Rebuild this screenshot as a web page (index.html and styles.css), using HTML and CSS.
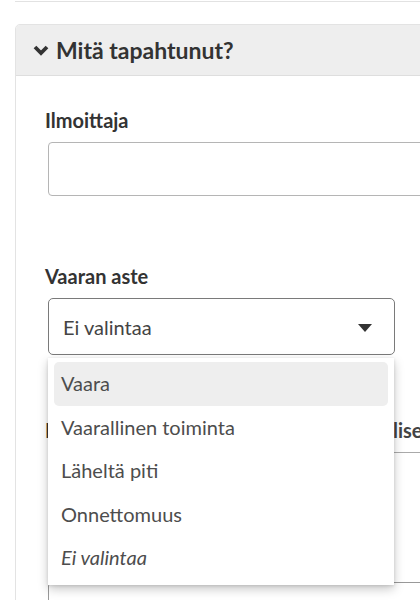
FILE: index.html
```html
<!DOCTYPE html>
<html lang="fi">
<head>
<meta charset="utf-8">
<link rel="stylesheet" href="styles.css">
</head>
<body>
<div class="page">
  <div class="prev-card"></div>
  <section class="card">
    <header class="card-head">
      <svg class="chev" viewBox="0 0 16 11" width="16" height="11"><path d="M2 2 L8 8 L14 2" fill="none" stroke="#333" stroke-width="3.8" stroke-linecap="butt" stroke-linejoin="miter"/></svg>
      <h2>Mitä tapahtunut?</h2>
    </header>
    <div class="card-body">
      <div class="field">
        <label class="lbl">Ilmoittaja</label>
        <div class="input"></div>
      </div>
      <div class="field field-select">
        <label class="lbl">Vaaran aste</label>
        <div class="select">
          <span>Ei valintaa</span>
          <svg class="caret" viewBox="0 0 14 8" width="14" height="8"><path d="M0 0 H14 L7 8 Z" fill="#333"/></svg>
        </div>
        <ul class="menu">
          <li class="active">Vaara</li>
          <li>Vaarallinen toiminta</li>
          <li>Läheltä piti</li>
          <li>Onnettomuus</li>
          <li class="empty">Ei valintaa</li>
        </ul>
      </div>
      <div class="field behind">
        <div class="tabs">
          <span class="tab-lbl">Ilmoituksen tyyppi</span>
          <span class="tab-r">lise</span>
        </div>
        <div class="textarea"></div>
      </div>
    </div>
  </section>
</div>
</body>
</html>
```
FILE: styles.css
```css
* { box-sizing: border-box; }
html, body { margin: 0; padding: 0; background: #fff; overflow: hidden; }
body { font-family: Lato, "Open Sans", sans-serif; color: #333; width: 420px; height: 600px; }
.page { padding-left: 15px; }
.prev-card { height: 2px; border-bottom: 1px solid #e2e2e2; margin-right: -20px; }
.card {
  margin-top: 22px;
  border: 1px solid #e3e3e3;
  border-radius: 5px 0 0 0;
  margin-right: -30px;
}
.card-head {
  height: 51px;
  background: #eeeeee;
  border-bottom: 1px solid #dedede;
  display: flex;
  align-items: center;
  padding-left: 17px;
  border-radius: 4px 0 0 0;
}
.chev { margin-right: 7px; margin-top: 0; }
.card-head h2 { margin: 0; font-size: 23px; font-weight: 700; color: #333; letter-spacing: 0; }
.card-body { padding: 32px 0 0 29px; }
.field { position: relative; }
.lbl { display: block; font-weight: 700; font-size: 20px; color: #333; line-height: 24px; }
.input {
  margin-top: 10px; margin-left: 3px;
  height: 54px;
  border: 1px solid #b5b5b5;
  border-radius: 4px;
}
.field-select { margin-top: 68px; }
.select {
  margin-top: 10px; margin-left: 3px;
  width: 347px; height: 57px;
  border: 1px solid #7a7a7a;
  border-radius: 5px;
  display: flex; align-items: center; justify-content: space-between;
  padding: 0 22px 0 14px;
  font-size: 20px; color: #444;
}
.caret { margin-top: 2px; }
.menu {
  position: absolute; z-index: 2;
  left: 3px; top: 94px;
  width: 346px;
  margin: 0; padding: 4px 6px 5px;
  list-style: none;
  background: #fff;
  box-shadow: 0 4px 10px rgba(0,0,0,0.22), 0 1px 3px rgba(0,0,0,0.12);
}
.menu li {
  height: 43.6px; line-height: 43px;
  padding-left: 7px;
  font-size: 20px; color: #4d4d4d;
  border-radius: 5px;
}
.menu li.active { background: #eeeeee; }
.menu li.empty { font-style: italic; }
.behind { margin-top: 63px; }
.tabs {
  display: flex; align-items: flex-start; justify-content: space-between;
  height: 35px; margin-left: 3px;
  border-bottom: 1px solid #aaa;
  line-height: 24px;
}
.tab-lbl { font-size: 20px; font-weight: 700; color: #333; margin-left: -3px; }
.tab-r { font-size: 20px; font-weight: 700; color: #444; width: 56px; }
.textarea { margin-top: 129px; margin-left: 3px; height: 60px; border: 1px solid #999; border-radius: 4px; }
```
